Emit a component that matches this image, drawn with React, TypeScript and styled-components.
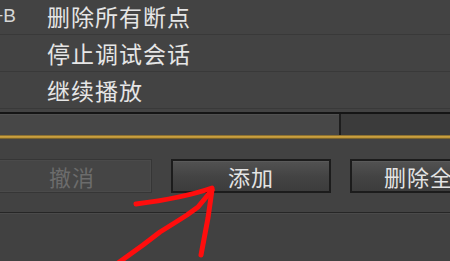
import React from "react";
import styled, { createGlobalStyle } from "styled-components";

const Global = createGlobalStyle`
  html, body { margin: 0; padding: 0; background: #424242; }
  body { width: 450px; height: 261px; overflow: hidden; }
`;

const Page = styled.div`
  position: relative;
  width: 450px;
  height: 261px;
  overflow: hidden;
  background: #434343;
  font-family: "Noto Sans CJK SC", "Noto Sans", sans-serif;
  display: flex;
  flex-direction: column;
`;

const Menu = styled.div`
  margin-top: -2px;
  display: flex;
  flex-direction: column;
`;

const MenuRow = styled.div`
  height: 36px;
  border-bottom: 1px solid #393939;
  display: grid;
  grid-template-columns: 16px 1fr;
  column-gap: 31px;
  align-items: center;
`;

const Shortcut = styled.span`
  font-family: "Liberation Sans", sans-serif;
  font-size: 19px;
  color: #d6d6d6;
  text-align: right;
  white-space: nowrap;
  overflow: hidden;
  direction: rtl;
`;

const Label = styled.span`
  font-size: 23px;
  line-height: 1;
  color: #e6e6e6;
  letter-spacing: 1px;
`;

const Spacer = styled.div`
  height: 3px;
`;

const BlackLine = styled.div`
  height: 2px;
  background: #151515;
`;

const ScrollBar = styled.div`
  display: flex;
  height: 21px;
`;

const Thumb = styled.div`
  width: 339px;
  background: #474747;
  border-right: 2px solid #1d1d1d;
  box-shadow: inset 0 1px 0 #505050;
`;

const Track = styled.div`
  flex: 1;
  background: #3b3b3b;
`;

const GoldLine = styled.div`
  height: 4px;
  background: linear-gradient(#6e5a2a, #d0a440 40%, #c39a3c 60%, #5a4a26);
`;

const ButtonRow = styled.div`
  display: flex;
  gap: 19px;
  padding: 20px 0 19px 0;
  margin-left: -8px;
  border-bottom: 1px solid #262626;
  box-shadow: 0 1px 0 #4a4a4a;
  background: #424242;
`;

const Button = styled.div<{ $disabled?: boolean }>`
  flex: 0 0 160px;
  height: 34px;
  box-sizing: border-box;
  display: flex;
  align-items: center;
  justify-content: center;
  font-size: 22px;
  letter-spacing: 1px;
  white-space: nowrap;
  overflow: hidden;
  border: ${(p) => (p.$disabled ? "1px solid #363636" : "2px solid #1c1c1c")};
  background: ${(p) =>
    p.$disabled ? "#454545" : "linear-gradient(#525252, #444444 50%, #3c3c3c)"};
  color: ${(p) => (p.$disabled ? "#6c6c6c" : "#e4e4e4")};
  box-shadow: ${(p) => (p.$disabled ? "inset 0 0 0 1px #4a4a4a" : "inset 0 1px 0 #5a5a5a")};
`;

const Bottom = styled.div`
  flex: 1;
  background: #414141;
  margin-top: 1px;
`;

const Arrow = styled.svg`
  position: absolute;
  left: 0;
  top: 0;
  pointer-events: none;
`;

export default function App() {
  return (
    <>
      <Global />
      <Page>
        <Menu>
          <MenuRow>
            <Shortcut>Ctrl+Shift+B</Shortcut>
            <Label>删除所有断点</Label>
          </MenuRow>
          <MenuRow>
            <Shortcut />
            <Label>停止调试会话</Label>
          </MenuRow>
          <MenuRow>
            <Shortcut />
            <Label>继续播放</Label>
          </MenuRow>
        </Menu>
        <Spacer />
        <BlackLine />
        <ScrollBar>
          <Thumb />
          <Track />
        </ScrollBar>
        <GoldLine />
        <ButtonRow>
          <Button $disabled>撤消</Button>
          <Button>添加</Button>
          <Button>删除全部</Button>
        </ButtonRow>
        <Bottom />
        <Arrow width="450" height="261" viewBox="0 0 450 261">
          <g fill="none" stroke="#ff0d0d" strokeWidth="5" strokeLinecap="round" strokeLinejoin="round">
            <path d="M136 204 C160 201 186 197 212 188" />
            <path d="M212 190 L198 207 L187 215 L176 222 L160 232 L143 245 L118 263" />
            <path d="M212 190 L208 218 L201 255" />
          </g>
        </Arrow>
      </Page>
    </>
  );
}
